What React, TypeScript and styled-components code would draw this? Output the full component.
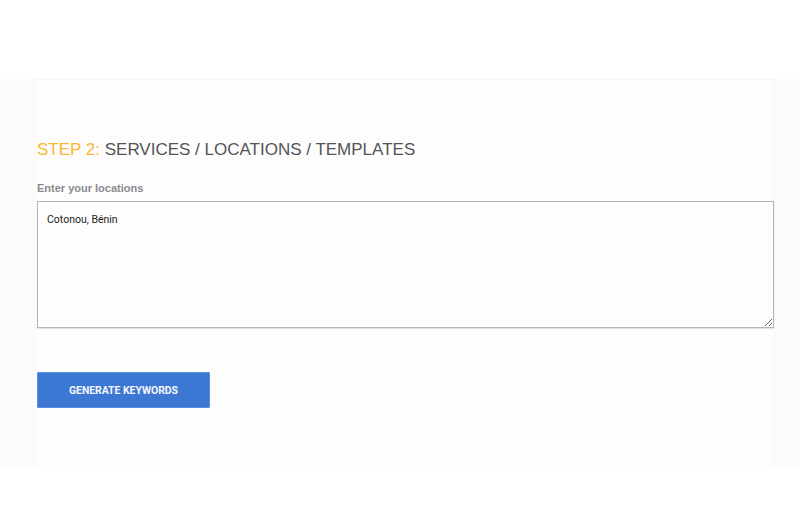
import React, { useState } from 'react';
import styled, { createGlobalStyle } from 'styled-components';

const GlobalStyle = createGlobalStyle`
  html, body {
    margin: 0;
    padding: 0;
    background: #ffffff;
    font-family: "Liberation Sans", Arial, sans-serif;
  }
`;

const Page = styled.div`
  width: 800px;
  height: 530px;
  padding-top: 79px;
  box-sizing: border-box;
  background: #ffffff;
`;

const Band = styled.section`
  background: #fbfbfb;
  height: 387px;
`;

const Container = styled.div`
  margin: 0 27px 0 36px;
  height: 100%;
  background: #fdfdfd;
  border-top: 1px solid #f6f6f6;
  box-sizing: border-box;
  padding: 58px 0 0 1px;
  display: flex;
  flex-direction: column;
`;

const Title = styled.h2`
  margin: 0;
  font-size: 17px;
  font-weight: 400;
  line-height: 24px;
  color: #545458;
`;

const Step = styled.span`
  color: #f9b731;
`;

const Label = styled.label`
  margin-top: 19px;
  font-size: 11px;
  font-weight: 700;
  color: #8a8a8e;
  line-height: 14px;
`;

const TextArea = styled.textarea`
  margin-top: 6px;
  width: 737px;
  height: 127px;
  box-sizing: border-box;
  border: 1px solid #b4b4b4;
  box-shadow: 0 1px 1px rgba(0, 0, 0, 0.1);
  background: #fefefe;
  padding: 11px 9px;
  font-family: Roboto, "Liberation Sans", sans-serif;
  font-size: 10.5px;
  color: #222222;
  resize: both;
  outline: none;
`;

const Button = styled.button`
  margin-top: 44px;
  width: 173px;
  height: 36px;
  background: #3d77d4;
  border: 1px solid #5a8ddd;
  border-radius: 1px;
  color: #f4f7fc;
  font-family: Roboto, "Liberation Sans", sans-serif;
  font-weight: 700;
  font-size: 10.4px;
  text-transform: uppercase;
  cursor: pointer;
`;

export default function App() {
  const [locations, setLocations] = useState('Cotonou, Bénin');

  return (
    <Page>
      <GlobalStyle />
      <Band>
        <Container>
          <Title>
            <Step>STEP 2:</Step> SERVICES / LOCATIONS / TEMPLATES
          </Title>
          <Label htmlFor="locations">Enter your locations</Label>
          <TextArea
            id="locations"
            value={locations}
            onChange={(e) => setLocations(e.target.value)}
          />
          <div>
            <Button>Generate Keywords</Button>
          </div>
        </Container>
      </Band>
    </Page>
  );
}
